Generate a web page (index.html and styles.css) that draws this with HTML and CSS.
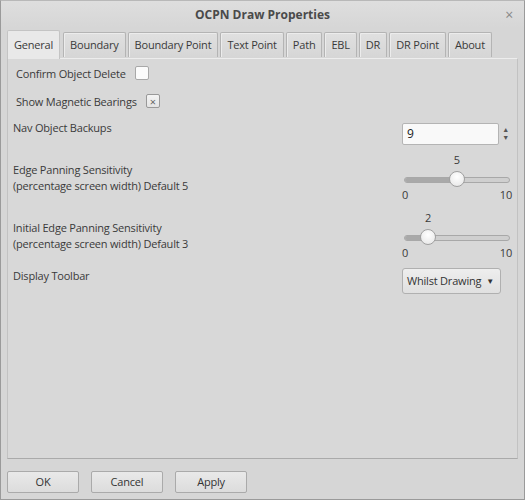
FILE: index.html
```html
<!DOCTYPE html>
<html>
<head>
<meta charset="utf-8">
<link rel="stylesheet" href="styles.css">
</head>
<body>
<div class="window">
  <div class="titlebar">
    <span class="title">OCPN Draw Properties</span>
    <span class="close">×</span>
  </div>
  <div class="tabs">
    <div class="tab active">General</div>
    <div class="tab">Boundary</div>
    <div class="tab">Boundary Point</div>
    <div class="tab">Text Point</div>
    <div class="tab">Path</div>
    <div class="tab">EBL</div>
    <div class="tab">DR</div>
    <div class="tab">DR Point</div>
    <div class="tab">About</div>
  </div>
  <div class="panel">
    <div class="row check-row">
      <span>Confirm Object Delete</span>
      <span class="checkbox"></span>
    </div>
    <div class="row check-row">
      <span>Show Magnetic Bearings</span>
      <span class="checkbox checked">×</span>
    </div>
    <div class="row ctl-row backups">
      <div class="label">Nav Object Backups</div>
      <div class="ctl">
        <div class="spin">
          <div class="spin-field">9</div>
          <div class="spin-arrows"><span>▲</span><span>▼</span></div>
        </div>
      </div>
    </div>
    <div class="row ctl-row slider-row">
      <div class="label">Edge Panning Sensitivity<br>(percentage screen width) Default 5</div>
      <div class="ctl">
        <div class="slider">
          <div class="slider-value"><span style="margin-left:47%">5</span></div>
          <div class="track"><div class="fill" style="width:50%"></div><div class="thumb" style="left:50%"></div></div>
          <div class="slider-labels"><span>0</span><span>10</span></div>
        </div>
      </div>
    </div>
    <div class="row ctl-row slider-row">
      <div class="label">Initial Edge Panning Sensitivity<br>(percentage screen width) Default 3</div>
      <div class="ctl">
        <div class="slider">
          <div class="slider-value"><span style="margin-left:21%">2</span></div>
          <div class="track"><div class="fill" style="width:22%"></div><div class="thumb" style="left:22%"></div></div>
          <div class="slider-labels"><span>0</span><span>10</span></div>
        </div>
      </div>
    </div>
    <div class="row ctl-row toolbar-row">
      <div class="label">Display Toolbar</div>
      <div class="ctl">
        <div class="dropdown">Whilst Drawing <span class="caret">▼</span></div>
      </div>
    </div>
  </div>
  <div class="buttons">
    <div class="btn">OK</div>
    <div class="btn">Cancel</div>
    <div class="btn">Apply</div>
  </div>
</div>
</body>
</html>
```
FILE: styles.css
```css
html, body {
  margin: 0;
  padding: 0;
  background: #d6d6d6;
}
body {
  font-family: "Open Sans", "Noto Sans", sans-serif;
  font-size: 11px;
  letter-spacing: -0.2px;
  color: #3a3a3a;
}
.window {
  width: 525px;
  height: 500px;
  box-sizing: border-box;
  border: 1px solid #9a9a9a;
  border-top-color: #b8b8b8;
  background: #d6d6d6;
  display: flex;
  flex-direction: column;
  white-space: nowrap;
}
.titlebar {
  height: 27px;
  display: flex;
  align-items: center;
  justify-content: center;
  position: relative;
  background: linear-gradient(#dedede, #d6d6d6);
}
.title {
  font-weight: bold;
  font-size: 12px;
  letter-spacing: 0;
  color: #4a4a4a;
}
.close {
  position: absolute;
  right: 11px;
  top: 4px;
  font-size: 14px;
  color: #888;
}
.tabs {
  display: flex;
  align-items: flex-end;
  gap: 2px;
  padding-left: 6px;
  height: 30px;
  position: relative;
  z-index: 1;
}
.tab {
  height: 24px;
  line-height: 24px;
  padding: 0 6px;
  border: 1px solid #b4b4b4;
  border-bottom: none;
  border-radius: 2px 2px 0 0;
  background: linear-gradient(#e0e0e0, #d6d6d6);
  box-shadow: inset 1px 1px 0 #ececec;
  margin-bottom: 1px;
}
.tab.active {
  height: 28px;
  line-height: 28px;
  background: #e9e9e9;
  margin-bottom: -1px;
  margin-right: 1px;
  border-color: #c4c4c4;
  box-shadow: none;
}
.panel {
  margin: 0 6px;
  height: 401px;
  box-sizing: border-box;
  border: 1px solid #c2c2c2;
  border-top-color: #ededed;
  border-bottom-color: #aaaaaa;
  background: #d8d8d8;
  padding: 0 5px 0 5px;
  display: flex;
  flex-direction: column;
}
.row {
  display: flex;
}
.check-row {
  height: 28px;
  align-items: center;
  padding-left: 3px;
  gap: 9px;
}
.checkbox {
  width: 12px;
  height: 12px;
  flex: none;
  border: 1px solid #a8a8a8;
  border-radius: 2px;
  background: #fbfbfb;
  display: inline-flex;
  align-items: center;
  justify-content: center;
  font-size: 11px;
  line-height: 1;
  color: #666;
}
.checkbox.checked {
  background: linear-gradient(#f4f4f4, #e4e4e4);
  border-color: #999;
}
.ctl-row {
  justify-content: space-between;
  line-height: 16px;
}
.ctl {
  width: 110px;
  flex: none;
}
.backups {
  height: 32px;
  margin-top: 5px;
}
.spin {
  display: flex;
  margin-top: 3px;
  height: 22px;
}
.spin-field {
  width: 97px;
  box-sizing: border-box;
  height: 22px;
  line-height: 20px;
  border: 1px solid #b4b4b4;
  border-radius: 2px;
  background: #f9f9f9;
  padding-left: 4px;
  font-size: 12px;
  color: #222;
}
.spin-arrows {
  flex: 1;
  display: flex;
  flex-direction: column;
  align-items: center;
  justify-content: center;
  font-size: 7px;
  line-height: 8px;
  color: #555;
}
.slider-row {
  height: 58px;
}
.slider-row .label {
  padding-top: 10px;
}
.slider-value {
  height: 16px;
}
.slider-value span {
  display: inline-block;
}
.track {
  position: relative;
  margin: 0 2px;
  height: 4px;
  margin-top: 9px;
  margin-bottom: 4px;
  border: 1px solid #a8a8a8;
  border-radius: 3px;
  background: #cfcfcf;
}
.fill {
  height: 100%;
  background: #a9a9a9;
  border-radius: 3px 0 0 3px;
}
.thumb {
  position: absolute;
  top: -7px;
  width: 16px;
  height: 16px;
  margin-left: -8px;
  box-sizing: border-box;
  border-radius: 50%;
  border: 1px solid #a0a0a0;
  background: radial-gradient(circle at 50% 35%, #ffffff, #e4e4e4);
}
.slider-labels {
  display: flex;
  justify-content: space-between;
  height: 16px;
}
.dropdown {
  width: 99px;
  height: 26px;
  box-sizing: border-box;
  border: 1px solid #b0b0b0;
  border-radius: 3px;
  background: linear-gradient(#eeeeee, #e0e0e0);
  display: flex;
  align-items: center;
  justify-content: space-between;
  padding: 0 6px 0 4px;
  color: #333;
}
.caret {
  font-size: 8px;
}
.buttons {
  display: flex;
  gap: 12px;
  padding: 12px 6px 0 6px;
}
.btn {
  width: 72px;
  height: 22px;
  box-sizing: border-box;
  line-height: 20px;
  text-align: center;
  border: 1px solid #aaaaaa;
  border-radius: 2px;
  background: linear-gradient(#e9e9e9, #dcdcdc);
  color: #333;
}
```
